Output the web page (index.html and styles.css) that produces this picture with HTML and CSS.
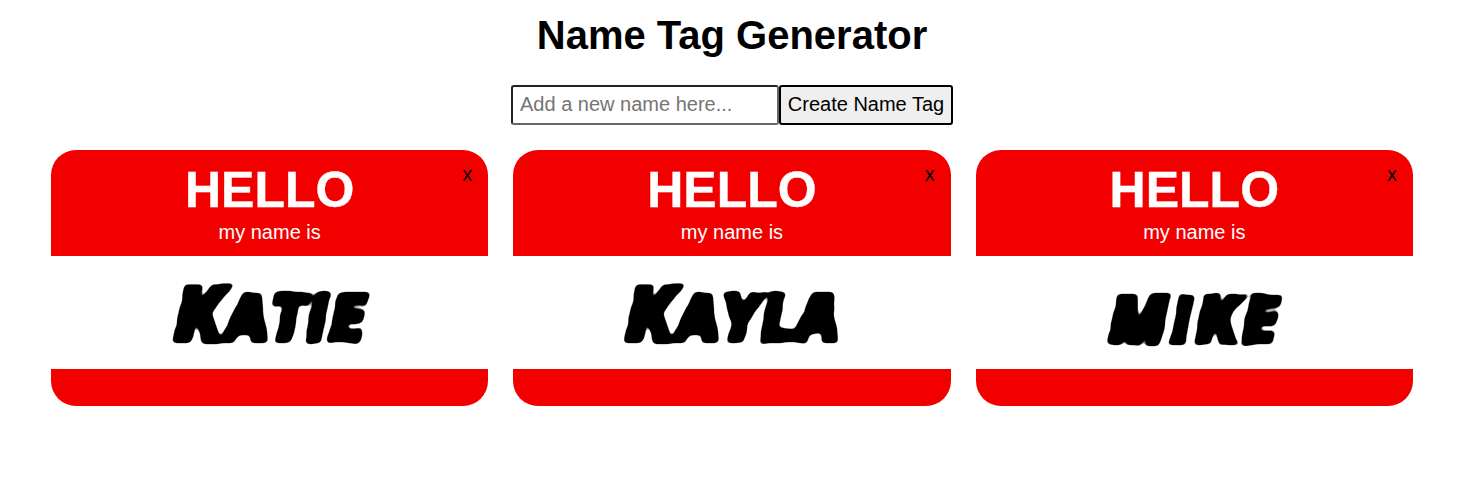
FILE: index.html
```html
<!DOCTYPE html>
<html lang="en">
<head>
    <meta charset="UTF-8">
    <title>Name Tag Generator</title>
    <link rel="stylesheet" href="styles.css">
</head>
<body>
    <!-- Wobbles and rounds the edges of the names so they look brushed -->
    <svg class="defs" width="0" height="0">
        <filter id="brush" x="-5%" y="-5%" width="110%" height="110%">
            <feTurbulence type="fractalNoise" baseFrequency="0.04" numOctaves="2" seed="4" result="noise"/>
            <feDisplacementMap in="SourceGraphic" in2="noise" scale="5" xChannelSelector="R" yChannelSelector="G"/>
            <feGaussianBlur stdDeviation="2"/>
            <feComponentTransfer>
                <feFuncA type="linear" slope="5" intercept="-1.9"/>
            </feComponentTransfer>
        </filter>
    </svg>

    <div class="app">
        <h1 class="title">Name Tag Generator</h1>

        <form class="add-form">
            <input type="text" class="name-input" placeholder="Add a new name here...">
            <button type="button" class="add-button">Create Name Tag</button>
        </form>

        <div class="tag-list">
            <div class="tag">
                <button type="button" class="remove">x</button>
                <div class="tag-head">
                    <div class="hello">HELLO</div>
                    <div class="subtitle">my name is</div>
                </div>
                <div class="tag-name"><span class="big-first">Katie</span></div>
                <div class="tag-foot"></div>
            </div>
            <div class="tag">
                <button type="button" class="remove">x</button>
                <div class="tag-head">
                    <div class="hello">HELLO</div>
                    <div class="subtitle">my name is</div>
                </div>
                <div class="tag-name"><span class="big-first">Kayla</span></div>
                <div class="tag-foot"></div>
            </div>
            <div class="tag">
                <button type="button" class="remove">x</button>
                <div class="tag-head">
                    <div class="hello">HELLO</div>
                    <div class="subtitle">my name is</div>
                </div>
                <div class="tag-name"><span class="plain-first">Mike</span></div>
                <div class="tag-foot"></div>
            </div>
        </div>
    </div>
</body>
</html>
```

FILE: styles.css
```css
body {
    margin: 0;
    font-family: "Liberation Sans", Arial, sans-serif;
    background: #fff;
    color: #000;
}

.defs {
    display: block;
    height: 0;
}

.app {
    width: 1464px;
}

.title {
    margin: 0;
    padding-top: 13px;
    font-size: 40px;
    line-height: 44px;
    text-align: center;
}

/* Form */
.add-form {
    display: flex;
    justify-content: center;
    margin-top: 28px;
}

.name-input {
    box-sizing: border-box;
    width: 268px;
    height: 40px;
    padding: 0 7px 2px;
    font-family: inherit;
    font-size: 20px;
    border: 2px solid;
    border-color: #222 #666 #666 #222;
    border-radius: 3px;
    outline: none;
}

.name-input::placeholder {
    color: #757575;
}

.add-button {
    box-sizing: border-box;
    width: 174px;
    height: 40px;
    padding: 0 0 2px;
    font-family: inherit;
    font-size: 20px;
    color: #000;
    background: #efefef;
    border: 2px solid #000;
    border-radius: 3px;
}

/* Name tags */
.tag-list {
    display: grid;
    grid-template-columns: repeat(3, 1fr);
    gap: 25px;
    padding: 25px 51px 0;
}

.tag {
    position: relative;
    border-radius: 25px;
    overflow: hidden;
    background: #f20000;
}

.remove {
    position: absolute;
    top: 13px;
    right: 16px;
    padding: 0;
    font-family: inherit;
    font-size: 20px;
    line-height: 22px;
    color: #000;
    background: none;
    border: none;
}

.tag-head {
    height: 106px;
    color: #fff;
    text-align: center;
}

.hello {
    padding-top: 10px;
    font-size: 50px;
    font-weight: bold;
    line-height: 61px;
    -webkit-text-stroke: 0.4px #fff;
}

.subtitle {
    font-size: 20px;
    line-height: 23px;
}

.tag-name {
    display: flex;
    justify-content: center;
    align-items: center;
    height: 113px;
    background: #fff;
}

.tag-name span {
    display: inline-block;
    font-family: "Open Sans", "Liberation Sans", sans-serif;
    font-size: 66px;
    font-weight: 800;
    font-style: italic;
    text-transform: uppercase;
    line-height: 84px;
    -webkit-text-stroke: 4px #000;
    filter: url(#brush);
}

.big-first {
    margin-top: 2px;
}

.big-first::first-letter {
    font-size: 76px;
}

.plain-first {
    margin-top: 9px;
    letter-spacing: 2px;
}

.tag-foot {
    height: 37px;
}
```
